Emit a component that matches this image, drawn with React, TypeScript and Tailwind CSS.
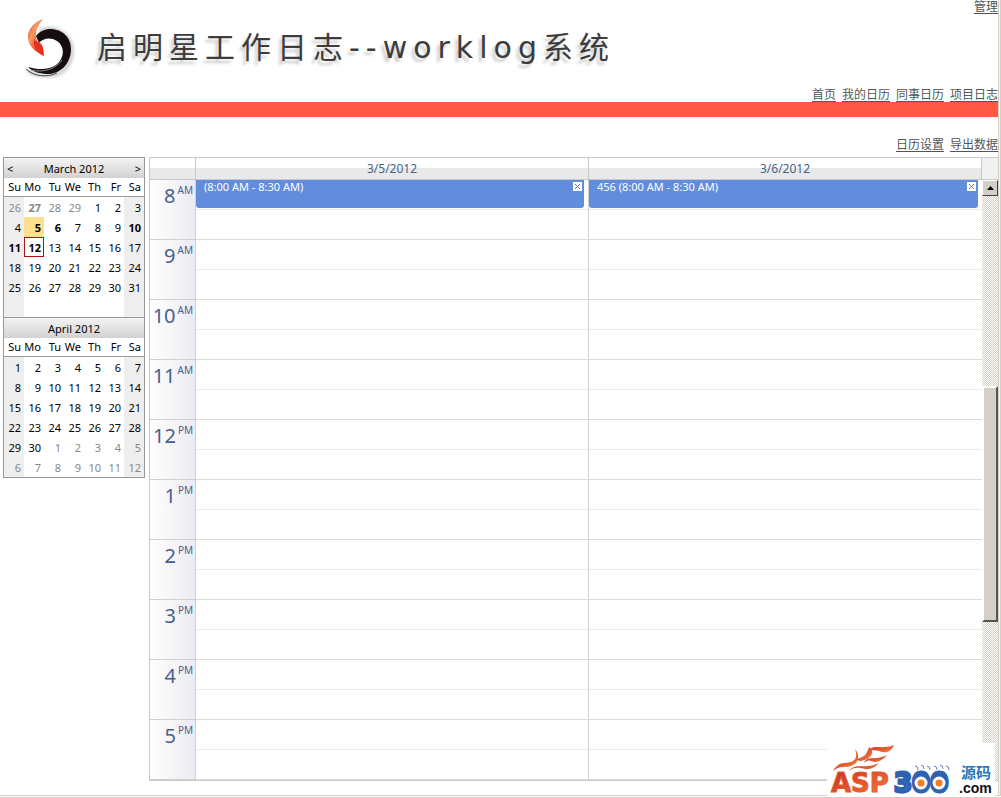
import clsx from 'clsx'

type Day = {
  day: number
  muted?: boolean
  bold?: boolean
  selected?: boolean
  today?: boolean
}

type MonthProps = {
  title: string
  weeks: Day[][]
  withNav?: boolean
}

type EventProps = {
  title: string
}

const weekdays = ['Su', 'Mo', 'Tu', 'We', 'Th', 'Fr', 'Sa']

const range = (from: number, to: number, muted = false): Day[] =>
  Array.from({ length: to - from + 1 }, (_, i) => ({ day: from + i, muted }))

const toWeeks = (days: Day[]) =>
  Array.from({ length: 6 }, (_, i) => days.slice(i * 7, i * 7 + 7))

const march = toWeeks([
  { day: 26, muted: true },
  { day: 27, muted: true, bold: true },
  ...range(28, 29, true),
  ...range(1, 4),
  { day: 5, bold: true, selected: true },
  { day: 6, bold: true },
  ...range(7, 9),
  { day: 10, bold: true },
  { day: 11, bold: true },
  { day: 12, bold: true, today: true },
  ...range(13, 31),
])

const april = toWeeks([...range(1, 30), ...range(1, 12, true)])

const hours = [
  { hour: 8, period: 'AM' },
  { hour: 9, period: 'AM' },
  { hour: 10, period: 'AM' },
  { hour: 11, period: 'AM' },
  { hour: 12, period: 'PM' },
  { hour: 1, period: 'PM' },
  { hour: 2, period: 'PM' },
  { hour: 3, period: 'PM' },
  { hour: 4, period: 'PM' },
  { hour: 5, period: 'PM' },
]

const columns = [
  { date: '3/5/2012', event: '(8:00 AM - 8:30 AM)' },
  { date: '3/6/2012', event: '456 (8:00 AM - 8:30 AM)' },
]

const mainLinks = ['首页', '我的日历', '同事日历', '项目日志']
const toolLinks = ['日历设置', '导出数据']

function LinkRow({ links }: { links: string[] }) {
  return (
    <nav className="flex justify-end gap-[6px] text-[12px] leading-[14px] text-[#555]">
      {links.map((link) => (
        <a key={link} href="#" className="underline underline-offset-2">
          {link}
        </a>
      ))}
    </nav>
  )
}

function Logo() {
  return (
    <svg viewBox="0 0 56 64" className="w-[56px] h-[64px]" aria-hidden="true">
      <defs>
        <linearGradient id="flame" x1="0" y1="0" x2="1" y2="1">
          <stop offset="0" stopColor="#d9442a" />
          <stop offset="0.35" stopColor="#f79a63" />
          <stop offset="0.6" stopColor="#f4512c" />
          <stop offset="1" stopColor="#d5221b" />
        </linearGradient>
        <filter id="soft" x="-20%" y="-20%" width="140%" height="140%">
          <feGaussianBlur stdDeviation="1.5" />
        </filter>
      </defs>
      <path
        d="M16 15C30 8 48 17 49 33C50 50 38 61 24 60C15 60 8 58 4 54"
        fill="none"
        stroke="#c4c4c4"
        strokeWidth="3"
        filter="url(#soft)"
      />
      <path
        d="M13 20C17 15 22 13 27 13C40 13 48 22 48 33C48 48 37 58 25 58C17 58 10 56 5 51C15 54 26 54 33 49C42 42 42 30 34 25C28 21 20 22 16 27Z"
        fill="#150d0f"
      />
      <path d="M3 53C10 60 24 62 34 57" fill="none" stroke="#444" strokeWidth="1" />
      <path d="M8 54C20 57 33 53 39 44" fill="none" stroke="#8f898b" strokeWidth="1" />
      <path
        d="M20 3C10 6 4 15 5 23C6 31 13 36 21 40C20 36 21 32 18 28L14 25C11 17 14 10 20 3Z"
        fill="url(#flame)"
      />
      <path d="M11 24L18 28C21 32 20 36 21 40C15 36 10 32 11 24Z" fill="#e5301f" />
    </svg>
  )
}

function Month({ title, weeks, withNav }: MonthProps) {
  return (
    <section className="border-t border-[#999]">
      <div className="flex items-center justify-between h-[20px] px-[3px] pt-px bg-linear-to-b from-[#f4f4f4] to-[#d2d2d2]">
        {withNav ? <button aria-label="Previous month">&lt;</button> : <span />}
        <h2>{title}</h2>
        {withNav ? <button aria-label="Next month">&gt;</button> : <span />}
      </div>
      <table className="w-full table-fixed border-separate border-spacing-0 text-right">
        <thead>
          <tr>
            {weekdays.map((name) => (
              <th key={name} className="h-[19px] p-0 pr-[3px] border-b border-[#999] font-normal">
                {name}
              </th>
            ))}
          </tr>
        </thead>
        <tbody>
          {weeks.map((week, row) => (
            <tr key={row}>
              {weekdays.map((name, col) => {
                const cell = week[col]
                const weekend = col === 0 || col === 6
                return (
                  <td
                    key={name}
                    className={clsx(
                      'h-[20px] p-0 pt-[2px]',
                      cell?.today ? 'border border-[#b01010] pr-[2px]' : 'pr-[3px]',
                      cell?.muted && 'text-[#888]',
                      cell?.bold && 'font-bold',
                      cell?.selected ? 'bg-[#ffe08c]' : weekend && 'bg-[#eee]',
                    )}
                  >
                    {cell?.day}
                  </td>
                )
              })}
            </tr>
          ))}
        </tbody>
      </table>
    </section>
  )
}

function Event({ title }: EventProps) {
  return (
    <div className="flex justify-between h-[28px] mr-[4px] pl-[8px] pr-[2px] rounded-b-[3px] bg-[#628cdc] text-white text-[11px] leading-[14px]">
      <span>{title}</span>
      <button aria-label="Delete" className="mt-[2px] w-[9px] h-[9px] bg-white">
        <svg viewBox="0 0 9 9" className="w-[9px] h-[9px]">
          <path d="M2 2L7 7M7 2L2 7" stroke="#777" strokeWidth="1" />
        </svg>
      </button>
    </div>
  )
}

function Schedule() {
  return (
    <table className="w-full table-fixed border-separate border-spacing-0 border-l border-b border-[#c8c8c8]">
      <colgroup>
        <col className="w-[46px]" />
        <col />
        <col />
      </colgroup>
      <thead>
        <tr className="text-[12px] leading-[16px] text-[#46618c]">
          <th className="h-[23px] p-0 border-y border-r border-[#c8c8c8] bg-linear-to-b from-white from-50% to-[#e9e9e9] to-50%" />
          {columns.map(({ date }) => (
            <th
              key={date}
              className="h-[23px] p-0 border-y border-r border-[#c8c8c8] bg-linear-to-b from-white from-50% to-[#e9e9e9] to-50% font-normal"
            >
              {date}
            </th>
          ))}
        </tr>
      </thead>
      <tbody>
        {hours.map(({ hour, period }, row) => (
          <tr key={hour}>
            <th className="h-[60px] p-0 border-b border-r border-[#d0d0d0] bg-linear-to-r from-white via-[#f7f4f7] to-[#e8ecf3] align-top font-normal text-[#46618c]">
              <div className="flex justify-end gap-[2px] pr-[2px] pt-[3px]">
                <span className="text-[20px] leading-[26px]">{hour}</span>
                <span className="text-[10px] leading-[14px]">{period}</span>
              </div>
            </th>
            {columns.map(({ date, event }, i) => (
              <td
                key={date}
                className={clsx(
                  'h-[60px] p-0 border-b border-b-[#dcdcdc] align-top',
                  i < columns.length - 1 && 'border-r border-r-[#d0d0d0]',
                )}
              >
                <div className="h-[30px] border-b border-[#ececec]">
                  {row === 0 && <Event title={event} />}
                </div>
              </td>
            ))}
          </tr>
        ))}
      </tbody>
    </table>
  )
}

function ScrollBar() {
  return (
    <div className="flex flex-col w-[16px] border-b border-[#c8c8c8]">
      <div className="h-[23px] border-y border-[#c8c8c8] bg-[#f1f1f1]" />
      <div className="flex-1 bg-[repeating-conic-gradient(#d4d0c8_0_25%,#fff_0_50%)] bg-[length:2px_2px]">
        <button
          aria-label="Scroll up"
          className="flex items-center justify-center w-full h-[16px] bg-[#d4d0c8] border border-t-white border-l-white border-r-[#404040] border-b-[#404040]"
        >
          <svg viewBox="0 0 7 4" className="w-[7px] h-[4px]">
            <path d="M0 4L3.5 0L7 4Z" fill="#000" />
          </svg>
        </button>
        <div className="mt-[190px] h-[236px] bg-[#d4d0c8] border-2 border-t-white border-l-white border-r-[#555] border-b-[#555]" />
      </div>
    </div>
  )
}

function Watermark() {
  return (
    <svg
      viewBox="0 0 168 54"
      className="absolute right-[6px] bottom-px w-[168px] h-[54px] overflow-visible bg-white"
      role="img"
      aria-label="ASP300源码.com"
    >
      <defs>
        <linearGradient id="asp" x1="0" y1="0" x2="1" y2="1">
          <stop offset="0" stopColor="#c9252b" />
          <stop offset="1" stopColor="#f58634" />
        </linearGradient>
        <linearGradient id="digits" x1="0" y1="0" x2="0" y2="1">
          <stop offset="0" stopColor="#2a4fa0" />
          <stop offset="1" stopColor="#3f83cc" />
        </linearGradient>
      </defs>
      <g fill="url(#asp)">
        <path d="M6 28C12 18 17 21 24 19C30 17 30 11 28 6C33 12 32 19 26 22C19 26 14 21 6 28Z" />
        <path d="M29 16C36 15 40 12 42 4C47 7 46 13 40 16C36 18 32 19 29 16Z" />
        <path d="M42 7C48 1 54 7 67 2C63 11 57 10 52 8C48 7 45 7 42 7Z" />
        <path d="M37 20C40 12 48 18 60 12C54 19 49 20 44 18C41 17 39 18 37 20Z" />
        <path d="M22 28C29 19 37 27 52 20C45 27 40 27 34 25C29 24 25 25 22 28Z" />
      </g>
      <text
        x="4"
        y="49"
        className="font-['DejaVu_Sans'] font-bold text-[26px]"
        fill="url(#asp)"
        stroke="#e55a2b"
        strokeWidth="1"
      >
        ASP
      </text>
      <text
        x="67"
        y="49"
        className="font-['DejaVu_Sans'] font-bold text-[26px]"
        fill="url(#digits)"
        stroke="#2f62b0"
        strokeWidth="3"
      >
        300
      </text>
      <g stroke="#5d86bd" strokeWidth="1" fill="none">
        <path d="M88 23q3 0 3 4M94 22q3 0 3 4M100 23q3 0 3 4" />
        <path d="M107 23q3 0 3 4M113 22q3 0 3 4M119 23q3 0 3 4" />
      </g>
      <g fill="#f47b20" stroke="#fff" strokeWidth="3">
        <circle cx="94" cy="40" r="5" />
        <circle cx="112" cy="40" r="5" />
      </g>
      <text
        x="134"
        y="35"
        className="font-['Noto_Sans_CJK_SC',sans-serif] font-bold text-[15px]"
        fill="#2577bd"
      >
        源码
      </text>
      <text
        x="132"
        y="50"
        className="font-['Liberation_Sans'] font-bold text-[14px]"
        fill="#111"
      >
        .com
      </text>
    </svg>
  )
}

export default function App() {
  return (
    <div className="relative flex flex-col min-h-screen overflow-hidden bg-white font-['Noto_Sans','Noto_Sans_CJK_SC',sans-serif]">
      <div className="flex flex-1">
        <div className="flex-1">
          <header className="flex justify-between h-[102px]">
            <div className="flex items-center gap-[18px] pl-[23px] pb-[7px]">
              <Logo />
              <h1 className="font-['DejaVu_Sans','Noto_Sans_CJK_SC',sans-serif] text-[30px] leading-[40px] tracking-[6px] text-[#3c3c3c] [text-shadow:-3px_4px_3px_#ccc]">
                启明星工作日志--worklog系统
              </h1>
            </div>
            <div className="flex flex-col justify-between">
              <LinkRow links={['管理']} />
              <LinkRow links={mainLinks} />
            </div>
          </header>
          <div className="h-[15px] bg-[#ff5743]" />
          <div className="pt-[21px] pb-[5px]">
            <LinkRow links={toolLinks} />
          </div>
          <main className="flex items-start gap-[4px] pl-[3px]">
            <aside className="w-[142px] border-x border-b border-[#999] text-[11px] leading-[16px] text-black">
              <Month title="March 2012" weeks={march} withNav />
              <Month title="April 2012" weeks={april} />
            </aside>
            <div className="flex flex-1">
              <div className="flex-1">
                <Schedule />
              </div>
              <ScrollBar />
            </div>
          </main>
        </div>
        <div className="w-[3px] border-x border-[#d4d0c8] bg-[#f5f3ee]" />
      </div>
      <footer className="h-[3px] border-y border-[#d4d0c8] bg-white" />
      <Watermark />
    </div>
  )
}
